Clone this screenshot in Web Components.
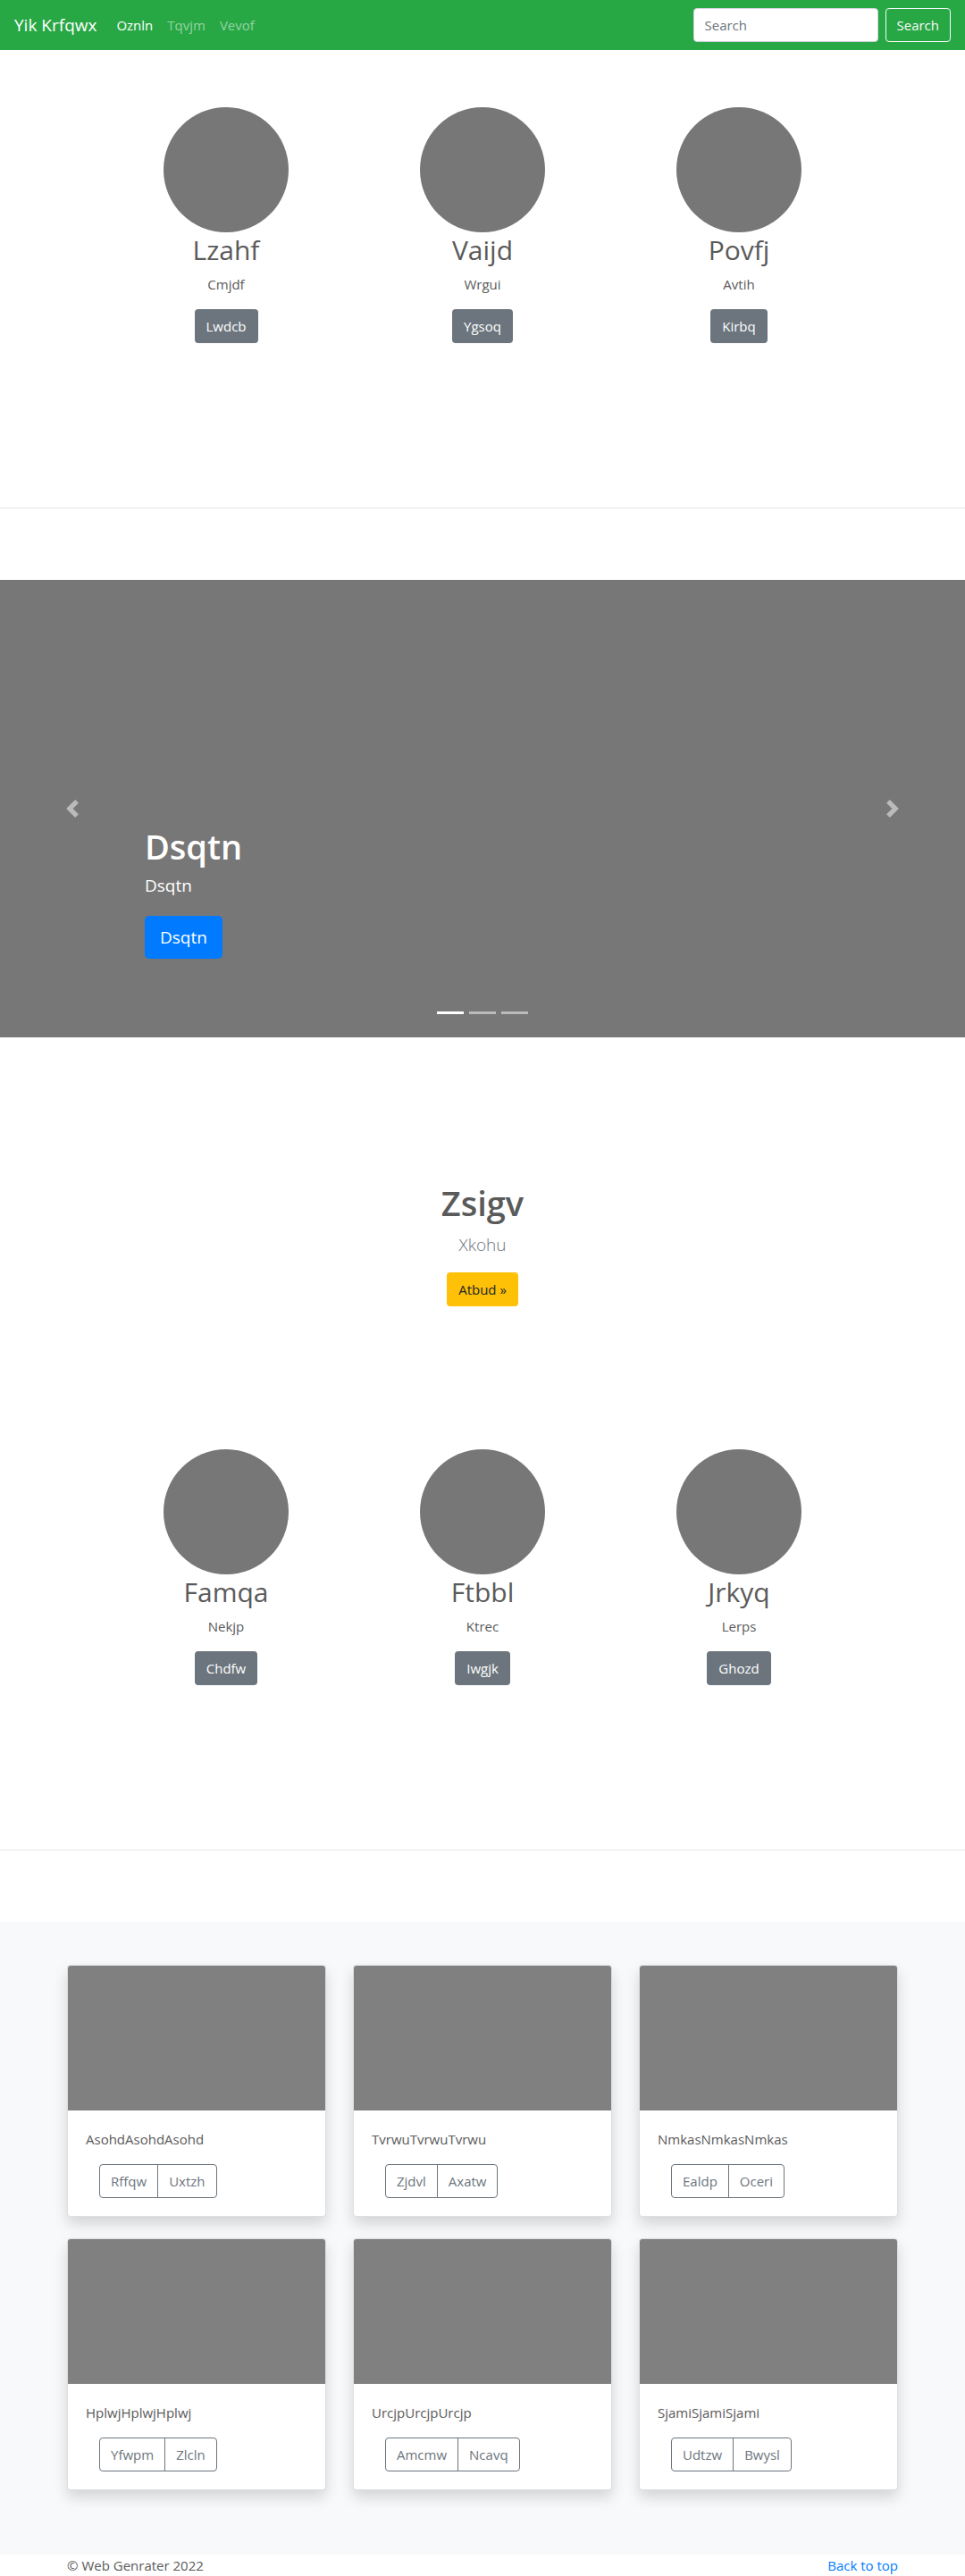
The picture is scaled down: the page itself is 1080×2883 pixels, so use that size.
<!DOCTYPE html>
<html lang="en">
<head>
<meta charset="utf-8">
<meta name="viewport" content="width=device-width, initial-scale=1">
<title>Yik Krfqwx</title>
<style>
  body { margin: 0; background: #fff; color: #5a5a5a; font: 400 15px/24px "Open Sans", "Noto Sans", sans-serif; }
</style>
</head>
<body>
<site-nav></site-nav>
<main>
  <feature-row>
    <feature-item heading="Lzahf" action="Lwdcb">Cmjdf</feature-item>
    <feature-item heading="Vaijd" action="Ygsoq">Wrgui</feature-item>
    <feature-item heading="Povfj" action="Kirbq">Avtih</feature-item>
  </feature-row>
  <hero-carousel heading="Dsqtn" action="Dsqtn">Dsqtn</hero-carousel>
  <promo-banner heading="Zsigv" action="Atbud »">Xkohu</promo-banner>
  <feature-row>
    <feature-item heading="Famqa" action="Chdfw">Nekjp</feature-item>
    <feature-item heading="Ftbbl" action="Iwgjk">Ktrec</feature-item>
    <feature-item heading="Jrkyq" action="Ghozd">Lerps</feature-item>
  </feature-row>
  <card-album>
    <album-card first="Rffqw" second="Uxtzh">AsohdAsohdAsohd</album-card>
    <album-card first="Zjdvl" second="Axatw">TvrwuTvrwuTvrwu</album-card>
    <album-card first="Ealdp" second="Oceri">NmkasNmkasNmkas</album-card>
    <album-card first="Yfwpm" second="Zlcln">HplwjHplwjHplwj</album-card>
    <album-card first="Amcmw" second="Ncavq">UrcjpUrcjpUrcjp</album-card>
    <album-card first="Udtzw" second="Bwysl">SjamiSjamiSjami</album-card>
  </card-album>
</main>
<site-footer></site-footer>

<script>
const base = `
  *, *::before, *::after { box-sizing: border-box; }
  :host { display: block; }
  h1, h2, p { margin: 0; }
  a { text-decoration: none; }
  button, input { font: inherit; margin: 0; }
  .btn { display: inline-block; padding: 6px 12px; border: 1px solid transparent; border-radius: 4px;
         font: inherit; line-height: 24px; text-align: center; cursor: pointer; white-space: nowrap; }
`;

class BaseElement extends HTMLElement {
  connectedCallback() {
    if (this.shadowRoot) return;
    this.attachShadow({ mode: "open" }).innerHTML = `<style>${base}${this.styles()}</style>${this.render()}`;
  }
  attr(name) { return this.getAttribute(name) || ""; }
}

customElements.define("site-nav", class extends BaseElement {
  styles() { return `
    nav { display: flex; align-items: center; min-height: 56px; padding: 8px 16px; background: #28a745; }
    .brand { margin-right: 14px; color: #fff; font-size: 19px; line-height: 30px; }
    ul { display: flex; flex: 1; margin: 0; padding: 0; list-style: none; }
    li a { display: block; padding: 8px; color: rgba(255,255,255,.5); }
    li a.active { color: #fff; }
    form { display: flex; gap: 8px; }
    input { width: 207px; height: 38px; padding: 6px 12px; border: 1px solid #ced4da; border-radius: 4px; background: #fff; color: #495057; }
    input::placeholder { color: #6c757d; opacity: 1; }
    .btn { border-color: #f8f9fa; background: transparent; color: #f8f9fa; }`; }
  render() { return `
    <nav>
      <a class="brand" href="#">Yik Krfqwx</a>
      <ul>
        <li><a class="active" href="#">Oznln</a></li>
        <li><a href="#">Tqvjm</a></li>
        <li><a href="#">Vevof</a></li>
      </ul>
      <form role="search">
        <input type="text" placeholder="Search" aria-label="Search">
        <button class="btn" type="button">Search</button>
      </form>
    </nav>`; }
});

customElements.define("feature-row", class extends BaseElement {
  styles() { return `
    .row { display: grid; grid-template-columns: repeat(3, 1fr); max-width: 861px; margin: 0 auto; padding: 64px 0 184px; }
    hr { height: 1px; margin: 0 0 80px; border: 0; background: #e5e5e5; }`; }
  render() { return `<div class="row"><slot></slot></div><hr>`; }
});

customElements.define("feature-item", class extends BaseElement {
  styles() { return `
    :host { display: flex; flex-direction: column; align-items: center; text-align: center; }
    .avatar { width: 140px; height: 140px; border-radius: 50%; background: #777; }
    h2 { margin-bottom: 6px; font-size: 30px; font-weight: 400; line-height: 40px; }
    p { margin-bottom: 16px; }
    .btn { background: #6c757d; color: #fff; }`; }
  render() { return `
    <div class="avatar"></div>
    <h2>${this.attr("heading")}</h2>
    <p><slot></slot></p>
    <a class="btn" href="#">${this.attr("action")}</a>`; }
});

customElements.define("hero-carousel", class extends BaseElement {
  styles() { return `
    section { display: grid; grid-template-columns: 15% 1fr 15%; min-height: 512px; background: #777; color: #fff; }
    .control { display: flex; align-items: center; justify-content: center; padding: 0; border: 0; background: none; color: #fff; opacity: .5; cursor: pointer; }
    svg { width: 20px; height: 20px; fill: currentColor; }
    .body { display: flex; flex-direction: column; justify-content: flex-end; align-items: flex-start; }
    h1 { margin-bottom: 6px; font-size: 38px; font-weight: 600; line-height: 48px; }
    p { margin-bottom: 20px; font-size: 19px; line-height: 28px; }
    .btn { padding: 8px 16px; border-radius: 5px; background: #007bff; color: #fff; font-size: 19px; line-height: 30px; }
    .dots { display: flex; align-self: center; gap: 6px; padding: 59px 0 26px; }
    .dots button { width: 30px; height: 3px; padding: 0; border: 0; background: #fff; opacity: .5; }
    .dots .on { opacity: 1; }`; }
  render() { return `
    <section>
      <button class="control" type="button" aria-label="Previous"><svg viewBox="0 0 8 8"><path d="M5.25 0l-4 4 4 4 1.5-1.5L4.25 4l2.5-2.5L5.25 0z"/></svg></button>
      <div class="body">
        <h1>${this.attr("heading")}</h1>
        <p><slot></slot></p>
        <a class="btn" href="#">${this.attr("action")}</a>
        <div class="dots">
          <button class="on" type="button" aria-label="Slide 1"></button>
          <button type="button" aria-label="Slide 2"></button>
          <button type="button" aria-label="Slide 3"></button>
        </div>
      </div>
      <button class="control" type="button" aria-label="Next"><svg viewBox="0 0 8 8"><path d="M2.75 0l-1.5 1.5L3.75 4l-2.5 2.5L2.75 8l4-4-4-4z"/></svg></button>
    </section>`; }
});

customElements.define("promo-banner", class extends BaseElement {
  styles() { return `
    section { display: flex; flex-direction: column; align-items: center; padding: 161px 16px 96px; text-align: center; }
    h1 { margin-bottom: 8px; font-size: 38px; font-weight: 600; line-height: 48px; }
    p { margin-bottom: 16px; color: #6c757d; font-size: 19px; font-weight: 300; line-height: 30px; }
    .btn { background: #ffc107; color: #212529; }`; }
  render() { return `
    <section>
      <h1>${this.attr("heading")}</h1>
      <p><slot></slot></p>
      <a class="btn" href="#">${this.attr("action")}</a>
    </section>`; }
});

customElements.define("card-album", class extends BaseElement {
  styles() { return `
    section { padding: 48px 15px 72px; background: #f8f9fa; }
    .grid { display: grid; grid-template-columns: repeat(3, 1fr); gap: 24px 30px; max-width: 930px; margin: 0 auto; }`; }
  render() { return `<section><div class="grid"><slot></slot></div></section>`; }
});

customElements.define("album-card", class extends BaseElement {
  styles() { return `
    :host { overflow: hidden; border: 1px solid rgba(0,0,0,.125); border-radius: 4px; background: #fff; box-shadow: 0 8px 16px rgba(0,0,0,.15); }
    .picture { height: 162px; background: #808080; }
    .body { padding: 20px; }
    p { margin-bottom: 16px; }
    .group { display: flex; padding: 0 15px; }
    .btn { border-color: #6c757d; background: transparent; color: #6c757d; }
    .btn:first-child { border-radius: 4px 0 0 4px; }
    .btn:last-child { margin-left: -1px; border-radius: 0 4px 4px 0; }`; }
  render() { return `
    <div class="picture"></div>
    <div class="body">
      <p><slot></slot></p>
      <div class="group">
        <button class="btn" type="button">${this.attr("first")}</button>
        <button class="btn" type="button">${this.attr("second")}</button>
      </div>
    </div>`; }
});

customElements.define("site-footer", class extends BaseElement {
  styles() { return `
    footer { padding: 0 15px; }
    div { display: flex; justify-content: space-between; max-width: 930px; margin: 0 auto; }
    a { color: #007bff; }`; }
  render() { return `<footer><div><p>© Web Genrater 2022</p><a href="#">Back to top</a></div></footer>`; }
});
</script>
</body>
</html>
